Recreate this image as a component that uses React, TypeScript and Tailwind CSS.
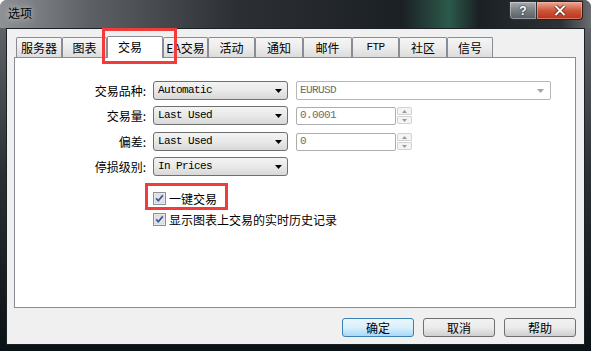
import React from 'react';

const cjk = "font-['Noto_Sans_CJK_SC','Noto_Sans',sans-serif]";
const mono = "font-['Liberation_Mono',monospace] text-[11px] tracking-[-0.6px]";

const tabs = [
  { label: '服务器', w: 'w-[46px]' },
  { label: '图表', w: 'w-[45px]' },
  { label: '交易', w: 'w-[56px]', active: true },
  { label: 'EA交易', w: 'w-[45px]' },
  { label: '活动', w: 'w-[47px]' },
  { label: '通知', w: 'w-[48px]' },
  { label: '邮件', w: 'w-[49px]' },
  { label: 'FTP', w: 'w-[47px]', mono: true },
  { label: '社区', w: 'w-[48px]' },
  { label: '信号', w: 'w-[46px]' },
];

const Arrow: React.FC<{ color?: string }> = ({ color = '#000' }) => (
  <svg width="7" height="4" viewBox="0 0 7 4">
    <path d="M0 0 H7 L3.5 4 Z" fill={color} />
  </svg>
);

const Combo: React.FC<{ value: string }> = ({ value }) => (
  <div className="flex items-center justify-between w-[135px] h-[19px] pl-[4px] pr-[5px] border border-[#707070] rounded-[3px] bg-gradient-to-b from-[#f3f3f3] via-[#e9e9e9] to-[#d8d8d8]">
    <span className={`${mono} text-black leading-none`}>{value}</span>
    <Arrow />
  </div>
);

const Spin: React.FC = () => (
  <div className="flex flex-col w-[15px] h-[17px] ml-[1px] gap-[1px]">
    <div className="flex-1 flex items-center justify-center border border-[#d2d2d2] rounded-t-[2px] bg-[#f4f4f4]">
      <svg width="5" height="3" viewBox="0 0 5 3"><path d="M0 3 L2.5 0 L5 3 Z" fill="#9a9a9a" /></svg>
    </div>
    <div className="flex-1 flex items-center justify-center border border-[#d2d2d2] rounded-b-[2px] bg-[#f4f4f4]">
      <svg width="5" height="3" viewBox="0 0 5 3"><path d="M0 0 H5 L2.5 3 Z" fill="#9a9a9a" /></svg>
    </div>
  </div>
);

const NumInput: React.FC<{ value: string }> = ({ value }) => (
  <div className="flex items-center">
    <div className="flex items-center w-[100px] h-[18px] pl-[3px] border border-[#abadb3] rounded-[2px] bg-white">
      <span className={`${mono} text-[#6d6d6d] leading-none`}>{value}</span>
    </div>
    <Spin />
  </div>
);

const Check: React.FC<{ label: string }> = ({ label }) => (
  <div className="flex items-center gap-[3px] h-[15px]">
    <svg width="13" height="13" viewBox="0 0 13 13">
      <rect x="0.5" y="0.5" width="12" height="12" fill="#f4f4f4" stroke="#8e8f8f" />
      <rect x="2" y="2" width="9" height="9" fill="#e2e4e8" stroke="#c6c9ce" strokeWidth="0.6" />
      <path d="M3.2 6.4 L5.3 8.8 L9.8 3.4" fill="none" stroke="#3c5497" strokeWidth="1.7" />
    </svg>
    <span className={`${cjk} text-[12px] leading-none text-black`}>{label}</span>
  </div>
);

const Button: React.FC<{ label: string; primary?: boolean }> = ({ label, primary }) => (
  <div
    className={`flex items-center justify-center w-[72px] h-[19px] rounded-[3px] border ${
      primary
        ? 'border-[#3c7fb1] bg-gradient-to-b from-[#eaf6fd] via-[#d9f0fc] to-[#a7d9f5]'
        : 'border-[#707070] bg-gradient-to-b from-[#f2f2f2] via-[#ebebeb] to-[#cfcfcf]'
    }`}
  >
    <span className={`${cjk} text-[12px] leading-none text-black`}>{label}</span>
  </div>
);

const Watermark: React.FC<{ className: string }> = ({ className }) => (
  <div className={`absolute pointer-events-none flex flex-col items-start ${className}`}>
    <span className="font-['Noto_Sans_CJK_SC',sans-serif] font-bold text-[19px] leading-none tracking-[3px] text-black/[0.025]">MT5中文网</span>
    <span className="font-['Liberation_Sans',sans-serif] font-bold text-[12px] leading-none mt-[5px] text-black/[0.025]">www.mt5user.com</span>
  </div>
);

const rows = [
  { label: '交易品种:', combo: 'Automatic', right: 'combo' },
  { label: '交易量:', combo: 'Last Used', right: '0.0001' },
  { label: '偏差:', combo: 'Last Used', right: '0' },
  { label: '停损级别:', combo: 'In Prices', right: '' },
];

export default function App() {
  return (
    <div className="relative w-[591px] h-[351px] overflow-hidden rounded-t-[7px] flex flex-col bg-gradient-to-b from-[#6a6e72] via-[#2a2f33] to-[#0b1216]">
      {/* Title bar */}
      <div className="flex items-start justify-between h-[28px] pr-[8px] bg-[linear-gradient(to_right,#8e9296_0%,#5d6165_15%,#2c3034_40%,#1b2024_68%,#2c5a4a_76%,#1a2024_81%,#2d3236_95%,#6a6e72_100%)]">
        <span className={`${cjk} text-[12px] leading-none mt-[7px] ml-[8px] text-black [text-shadow:0_0_6px_rgba(255,255,255,0.8)]`}>选项</span>
        <div className="flex mt-[1px]">
          <div className="flex items-center justify-center w-[28px] h-[19px] rounded-bl-[4px] border border-[#2b2f33] bg-gradient-to-b from-[#a9adb1] via-[#7a7f84] to-[#585d62] shadow-[inset_0_0_0_1px_rgba(255,255,255,0.35)]">
            <span className="font-['Liberation_Sans',sans-serif] font-bold text-[12px] leading-none text-white [text-shadow:0_0_2px_#000]">?</span>
          </div>
          <div className="flex items-center justify-center w-[46px] h-[19px] rounded-br-[4px] border border-l-0 border-[#3a1a12] bg-gradient-to-b from-[#e9a997] via-[#cf563a] to-[#b8321a] shadow-[inset_0_0_0_1px_rgba(255,200,180,0.45)]">
            <svg width="12" height="11" viewBox="0 0 12 11">
              <path d="M1.5 1 L10.5 10 M10.5 1 L1.5 10" stroke="#5a2012" strokeWidth="3.6" />
              <path d="M1.5 1 L10.5 10 M10.5 1 L1.5 10" stroke="#fff" strokeWidth="2" />
            </svg>
          </div>
        </div>
      </div>

      {/* Client area */}
      <div className="flex-1 mx-[6px] mb-[6px] border border-[#1b2024] bg-[#f0f0f0] flex flex-col pt-[7px] pl-[7px] pr-[8px]">
        {/* Tabs */}
        <div className="flex items-end h-[21px] pl-[2px]">
          {tabs.map((t) => (
            <div
              key={t.label}
              className={`${t.w} flex items-center justify-center border border-b-0 border-[#898c95] rounded-t-[2px] ${
                t.active
                  ? 'relative z-10 h-[22px] -mb-px bg-white'
                  : 'h-[20px] bg-gradient-to-b from-[#f5f5f5] via-[#ececec] to-[#dcdcdc]'
              }`}
            >
              <span className={`${t.mono ? mono : cjk + ' text-[12px]'} leading-none text-black ${t.active ? 'pr-[10px] -mt-[1px]' : ''}`}>
                {t.label}
              </span>
            </div>
          ))}
        </div>

        {/* Panel */}
        <div className="h-[251px] border border-[#898c95] bg-white flex flex-col pt-[23px]">
          <div className="flex flex-col gap-[6px]">
            {rows.map((r, i) => (
              <div key={i} className={`flex items-center ${i === 2 ? 'mt-[1px]' : ''}`}>
                <span className={`${cjk} w-[133px] text-right text-[12px] leading-none text-black pr-[2px]`}>{r.label}</span>
                <div className="ml-[5px]">
                  <Combo value={r.combo} />
                </div>
                <div className="ml-[8px]">
                  {r.right === 'combo' ? (
                    <div className="flex items-center justify-between w-[255px] h-[19px] pl-[3px] pr-[6px] border border-[#b4b7ba] rounded-[2px] bg-white">
                      <span className={`${mono} text-[#6d6d6d] leading-none`}>EURUSD</span>
                      <Arrow color="#a6a6a6" />
                    </div>
                  ) : r.right ? (
                    <NumInput value={r.right} />
                  ) : null}
                </div>
              </div>
            ))}
          </div>
          <div className="flex flex-col gap-[6px] mt-[15px] ml-[138px]">
            <Check label="一键交易" />
            <Check label="显示图表上交易的实时历史记录" />
          </div>
        </div>

        {/* Buttons */}
        <div className="flex justify-end gap-[9px] mt-[10px]">
          <Button label="确定" primary />
          <Button label="取消" />
          <Button label="帮助" />
        </div>
      </div>

      {/* Watermarks */}
      <Watermark className="left-[434px] top-[167px]" />
      <Watermark className="left-[55px] top-[280px]" />
      <Watermark className="left-[313px] top-[279px]" />

      {/* Highlight boxes */}
      <div className="absolute left-[102px] top-[28px] w-[75px] h-[36px] border-[3px] border-[#f23c3c] pointer-events-none" />
      <div className="absolute left-[145px] top-[183px] w-[83px] h-[27px] border-[3px] border-[#f23c3c] pointer-events-none" />
    </div>
  );
}
